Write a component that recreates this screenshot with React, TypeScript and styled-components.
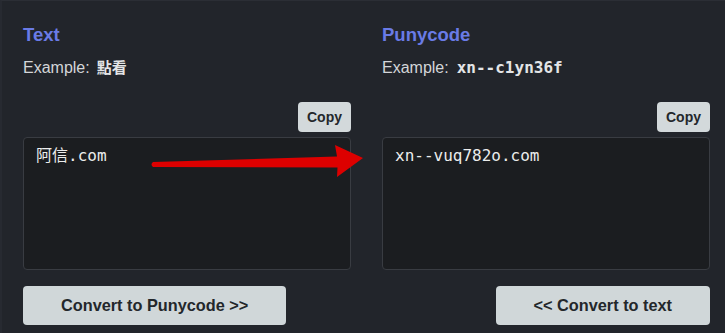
import React from "react";
import styled, { createGlobalStyle } from "styled-components";

const Global = createGlobalStyle`
  html, body { margin: 0; padding: 0; background: #22252b; }
  body { font-family: "Liberation Sans", Arial, sans-serif; }
  * { box-sizing: border-box; }
`;

const Page = styled.div`
  position: relative;
  width: 725px;
  height: 333px;
  overflow: hidden;
  background: #22252b;
  border-top: 1px solid #2b2e35;
  border-left: 2px solid #272a31;
  padding: 23px 15px 0 21px;
  display: grid;
  grid-template-columns: 328px 328px;
  column-gap: 31px;
  align-items: start;
`;

const Column = styled.section`
  display: flex;
  flex-direction: column;
`;

const Heading = styled.h2`
  margin: 0;
  font-size: 18.5px;
  line-height: 22px;
  font-weight: 700;
  color: #6a7be6;
`;

const Example = styled.p`
  margin: 12px 0 0;
  font-size: 16px;
  line-height: 20px;
  color: #d4d6d9;
`;

const Code = styled.code<{ $cjk?: boolean }>`
  margin-left: ${(p) => (p.$cjk ? "7px" : "8px")};
  font-family: ${(p) =>
    p.$cjk
      ? '"Noto Sans CJK TC", "Noto Sans CJK SC", sans-serif'
      : '"DejaVu Sans Mono", monospace'};
  font-size: ${(p) => (p.$cjk ? "15px" : "16px")};
  line-height: 1;
  font-weight: 700;
  color: #e4e5e7;
`;

const CopyRow = styled.div`
  margin-top: 24px;
  display: flex;
  justify-content: flex-end;
`;

const CopyButton = styled.button`
  height: 30px;
  width: 53px;
  padding: 0;
  border: none;
  border-radius: 4px;
  background: #d3d9db;
  color: #23272b;
  font-family: "Liberation Sans", Arial, sans-serif;
  font-size: 14px;
  font-weight: 700;
  cursor: pointer;
`;

const Area = styled.textarea`
  margin-top: 5px;
  height: 133px;
  width: 100%;
  resize: none;
  background: #1b1d20;
  border: 1px solid #393c42;
  border-radius: 4px;
  padding: 8px 12px;
  color: #eceded;
  font-family: "DejaVu Sans Mono", "Noto Sans CJK TC", "Noto Sans CJK SC", monospace;
  font-size: 16px;
  line-height: 20px;
  outline: none;
`;

const ActionRow = styled.div<{ $end?: boolean }>`
  margin-top: 16px;
  display: flex;
  justify-content: ${(p) => (p.$end ? "flex-end" : "flex-start")};
`;

const ActionButton = styled.button`
  height: 39px;
  padding: 0 38px;
  border: none;
  border-radius: 4px;
  background: #d0d7d9;
  color: #23272b;
  font-family: "Liberation Sans", Arial, sans-serif;
  font-size: 16.3px;
  font-weight: 700;
  cursor: pointer;
`;

const Arrow = styled.svg`
  position: absolute;
  left: 0;
  top: 0;
  pointer-events: none;
`;

export default function App() {
  return (
    <>
      <Global />
      <Page>
        <Column>
          <Heading>Text</Heading>
          <Example>
            Example:<Code $cjk>點看</Code>
          </Example>
          <CopyRow>
            <CopyButton>Copy</CopyButton>
          </CopyRow>
          <Area readOnly defaultValue="阿信.com" />
          <ActionRow>
            <ActionButton>Convert to Punycode &gt;&gt;</ActionButton>
          </ActionRow>
        </Column>
        <Column>
          <Heading>Punycode</Heading>
          <Example>
            Example:<Code>xn--c1yn36f</Code>
          </Example>
          <CopyRow>
            <CopyButton>Copy</CopyButton>
          </CopyRow>
          <Area readOnly defaultValue="xn--vuq782o.com" />
          <ActionRow $end>
            <ActionButton>&lt;&lt; Convert to text</ActionButton>
          </ActionRow>
        </Column>
        <Arrow width="725" height="333" viewBox="0 0 725 333">
          <path
            d="M151 161 L335 155.5 L333 144 L361 157 L335 176 L335.5 166.5 L151 166 Q148 163.5 151 161 Z"
            fill="#dd0000"
          />
        </Arrow>
      </Page>
    </>
  );
}
